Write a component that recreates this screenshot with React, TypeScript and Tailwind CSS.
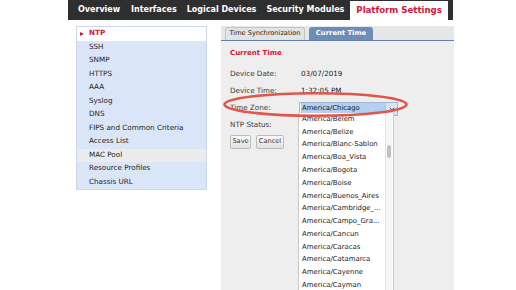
import React from "react";

const sideItems = [
  "NTP",
  "SSH",
  "SNMP",
  "HTTPS",
  "AAA",
  "Syslog",
  "DNS",
  "FIPS and Common Criteria",
  "Access List",
  "MAC Pool",
  "Resource Profiles",
  "Chassis URL",
];

const zones = [
  "America/Belem",
  "America/Belize",
  "America/Blanc-Sablon",
  "America/Boa_Vista",
  "America/Bogota",
  "America/Boise",
  "America/Buenos_Aires",
  "America/Cambridge_...",
  "America/Campo_Gra...",
  "America/Cancun",
  "America/Caracas",
  "America/Catamarca",
  "America/Cayenne",
  "America/Cayman",
];

export default function App() {
  return (
    <div className="relative w-[516px] h-[290px] overflow-hidden bg-white font-['DejaVu_Sans',sans-serif] text-[#2a2a2a]">
      {/* top nav */}
      <div className="ml-[68px] w-[385px] h-[20px] bg-[#2f2f2f] flex items-stretch pl-[10px] text-[8px] font-bold text-white whitespace-nowrap">
        <div className="flex items-center w-[44px]">Overview</div>
        <div className="flex items-center ml-[9px]">Interfaces</div>
        <div className="flex items-center ml-[10px]">Logical Devices</div>
        <div className="flex items-center ml-[10px]">Security Modules</div>
        <div className="flex items-center ml-[6px] mt-[1px] px-[6px] bg-white text-[#d2173a] text-[8.6px]">
          Platform Settings
        </div>
      </div>

      <div className="flex mt-[6px]">
        {/* sidebar */}
        <div className="ml-[76px] w-[131px] self-start border border-[#cbd7e8] bg-[#dae6f8]">
          {sideItems.map((s, i) => (
            <div
              key={s}
              className={
                "h-[13.5px] flex items-center pl-[12px] text-[7.2px] relative whitespace-nowrap " +
                (i === 0
                  ? "bg-white text-[#d2173a] font-bold"
                  : i === 9
                  ? "bg-[#ebebeb] text-[#222]"
                  : "text-[#222]")
              }
            >
              {i === 0 && (
                <span className="absolute left-[3px] top-[4.5px] w-0 h-0 border-y-[2.5px] border-y-transparent border-l-[4px] border-l-[#d2173a]" />
              )}
              {s}
            </div>
          ))}
        </div>

        {/* panel */}
        <div className="ml-[14px] w-[233px] h-[264px] bg-[#eeeeee] relative">
          <div className="h-[15px] bg-[#e7e7e7] border-b border-[#5f7fa8] flex items-end pl-[4px] gap-[4px]">
            <div className="h-[13px] w-[80px] flex items-center justify-center border border-b-0 border-[#c4c4c4] bg-[#e3e3e3] rounded-t-[3px] text-[6.6px] text-[#222] whitespace-nowrap">
              Time Synchronization
            </div>
            <div className="h-[13px] w-[64px] flex items-center justify-center bg-[#6d8cb8] rounded-t-[3px] text-[6.8px] font-bold text-white whitespace-nowrap">
              Current Time
            </div>
          </div>

          <div className="pl-[9px] pt-[8px]">
            <div className="h-[9px] flex items-center text-[7px] font-bold text-[#d2173a]">
              Current Time
            </div>
            <div className="mt-[8px] h-[17px] flex items-center text-[7.2px]">
              <div className="w-[71px] text-[#3a3a3a]">Device Date:</div>
              <div className="text-[#222]">03/07/2019</div>
            </div>
            <div className="h-[17px] flex items-center text-[7.2px]">
              <div className="w-[71px] text-[#3a3a3a]">Device Time:</div>
              <div className="text-[#222]">1:32:05 PM</div>
            </div>
            <div className="h-[17px] flex items-center text-[7.2px]">
              <div className="w-[69px] text-[#3a3a3a]">Time Zone:</div>
              <div className="w-[99px] h-[14px] flex border border-[#9fb6d6] bg-white">
                <div className="flex-1 flex items-center pl-[1px]">
                  <span className="bg-[#b5cff2] h-[11px] flex-1 flex items-center pl-[1px] text-[6.8px] text-[#111]">
                    America/Chicago
                  </span>
                </div>
                <div className="w-[12px] bg-[#d8e5f7] border-l border-[#b3c7e3] flex items-center justify-center">
                  <svg width="6" height="4" viewBox="0 0 6 4">
                    <path d="M0.8 0.8 L3 3 L5.2 0.8" stroke="#445" strokeWidth="1" fill="none" />
                  </svg>
                </div>
              </div>
            </div>
            <div className="h-[17px] flex items-center text-[7.2px]">
              <div className="w-[71px] text-[#3a3a3a]">NTP Status:</div>
            </div>
            <div className="mt-[1px] flex gap-[5px]">
              <div className="h-[14px] w-[21px] flex items-center justify-center border border-[#bdbdbd] rounded-[2px] bg-gradient-to-b from-[#fafafa] to-[#e2e2e2] text-[6.6px] text-[#333]">
                Save
              </div>
              <div className="h-[14px] w-[28px] flex items-center justify-center border border-[#bdbdbd] rounded-[2px] bg-gradient-to-b from-[#fafafa] to-[#e2e2e2] text-[6.6px] text-[#333]">
                Cancel
              </div>
            </div>
          </div>

          {/* dropdown list */}
          <div className="absolute left-[77px] top-[87px] w-[96px] bottom-0 bg-white border-x border-[#c9c9c9] overflow-hidden">
            <div className="-mt-[0.5px]">
              {zones.map((z) => (
                <div key={z} className="h-[12.8px] flex items-center pl-[3px] text-[6.9px] text-[#1a1a1a] whitespace-nowrap">
                  {z}
                </div>
              ))}
            </div>
            <div className="absolute right-[1px] top-0 bottom-0 w-[7px] bg-[#f7f7f7] border-l border-[#e4e4e4]">
              <div className="absolute left-[1px] top-[32px] w-[4px] h-[13px] rounded-[2px] bg-[#c2c2c2]" />
            </div>
          </div>
        </div>
      </div>

      {/* red highlight ellipse */}
      <svg className="absolute left-[221px] top-[91px]" width="190" height="28" viewBox="0 0 190 28">
        <ellipse cx="94.5" cy="13.5" rx="91" ry="11.3" fill="none" stroke="#e0564b" strokeWidth="2.6" />
      </svg>
    </div>
  );
}
